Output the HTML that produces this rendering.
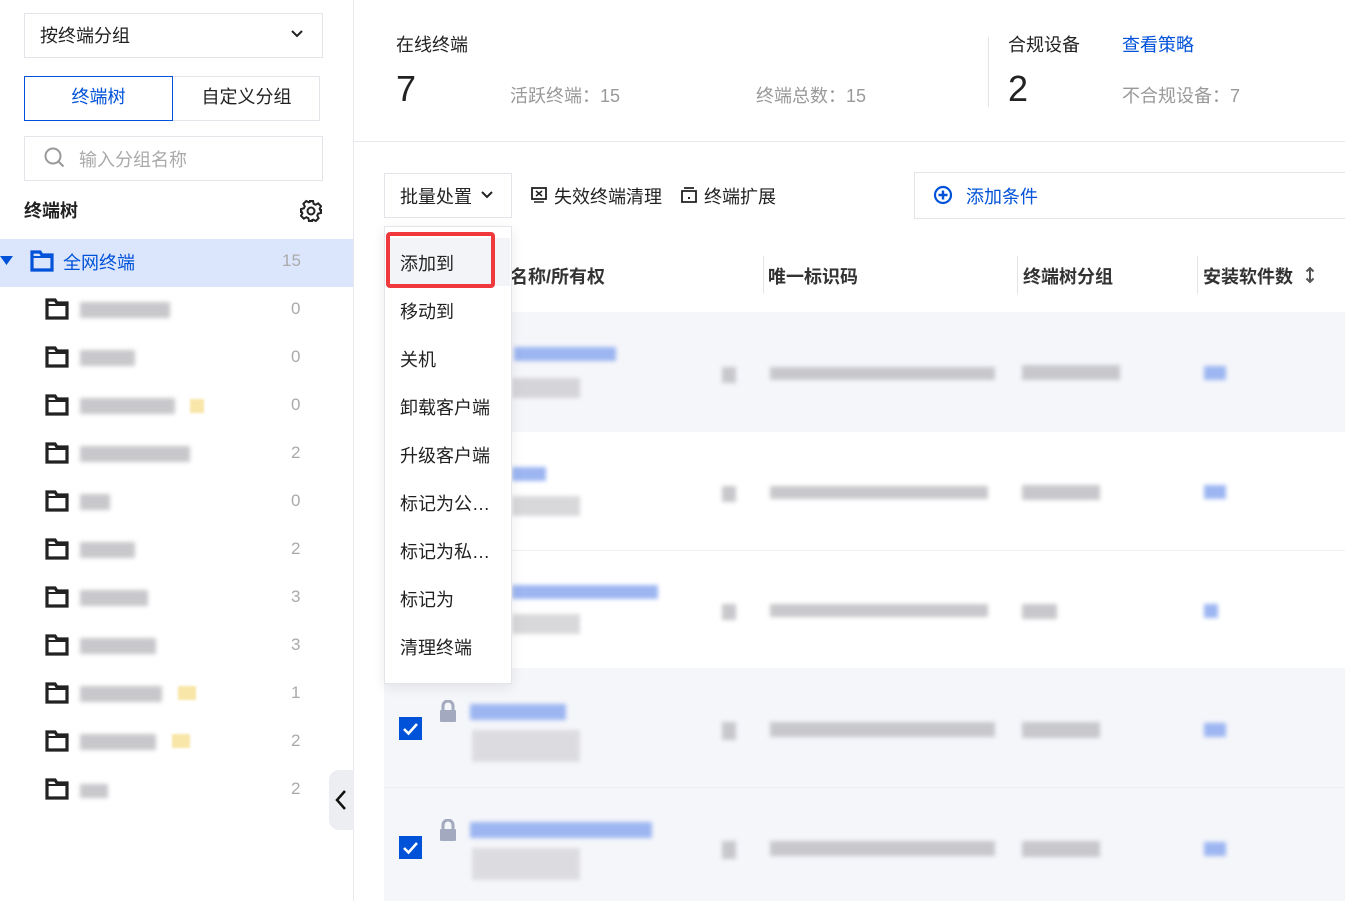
<!DOCTYPE html><html><head><meta charset="utf-8"><style>
*{box-sizing:border-box;margin:0;padding:0}
body{width:1345px;height:901px;overflow:hidden;background:#fff;font-family:"Liberation Sans","Noto Sans CJK SC",sans-serif;font-size:18px;color:#222;position:relative}
.a{position:absolute}
.box{position:absolute;border:1px solid #e3e5ea;background:#fff}
.bl{position:absolute;filter:blur(2px);background:#c8c8cc}
.blb{position:absolute;filter:blur(2px);background:#9db6f2}
.cnt{position:absolute;left:291px;color:#aaa;font-size:17px}
.fold{position:absolute;left:45px}
.mi{position:absolute;left:400px;font-size:18px;color:#222}
.chk{position:absolute;left:399px;width:23px;height:23px;background:#0052d9}
</style></head><body>
<svg width="0" height="0" style="position:absolute"><defs><symbol id="fd" viewBox="0 0 24 22"><path d="M2 2h8l2 3h10v15H2z" fill="none" stroke="currentColor" stroke-width="3.2" stroke-linejoin="miter"/><path d="M2 7h20" stroke="currentColor" stroke-width="2"/></symbol></defs></svg>
<!-- sidebar -->
<div class="a" style="left:353px;top:0;width:1px;height:901px;background:#e8e8ec"></div>
<div class="box" style="left:24px;top:13px;width:299px;height:45px"></div>
<div class="a" style="left:40px;top:22px">按终端分组</div>
<svg class="a" style="left:290px;top:29px" width="14" height="10"><path d="M2 2l5 5 5-5" stroke="#222" stroke-width="2" fill="none"/></svg>
<div class="box" style="left:24px;top:76px;width:296px;height:45px"></div>
<div class="a" style="left:24px;top:76px;width:149px;height:45px;border:1px solid #0052d9;color:#0052d9;text-align:center;line-height:41px">终端树</div>
<div class="a" style="left:173px;top:76px;width:147px;height:45px;text-align:center;line-height:43px">自定义分组</div>
<div class="box" style="left:24px;top:136px;width:299px;height:45px"></div>
<svg class="a" style="left:43px;top:146px" width="24" height="24"><circle cx="10" cy="10" r="7.5" stroke="#999" stroke-width="2" fill="none"/><path d="M15.5 15.5l5 5" stroke="#999" stroke-width="2"/></svg>
<div class="a" style="left:79px;top:146px;color:#aaa">输入分组名称</div>
<div class="a" style="left:24px;top:197px;font-weight:bold">终端树</div>
<svg class="a" style="left:299px;top:199px" width="24" height="24" viewBox="0 0 24 24"><path d="M10 2h4l.6 2.8 2 1 2.6-1.4 2.8 2.8-1.4 2.6 1 2L22 10v4l-2.8.6-1 2 1.4 2.6-2.8 2.8-2.6-1.4-2 1L14 22h-4l-.6-2.8-2-1-2.6 1.4-2.8-2.8 1.4-2.6-1-2L2 14v-4l2.8-.6 1-2-1.4-2.6 2.8-2.8 2.6 1.4 2-1z" fill="none" stroke="#222" stroke-width="2"/><circle cx="12" cy="12" r="3.5" fill="none" stroke="#222" stroke-width="2"/></svg>
<div class="a" style="left:0;top:239px;width:353px;height:48px;background:#dbe6fd"></div>
<svg class="a" style="left:0;top:256px" width="13" height="10"><path d="M0 0h13L6.5 9z" fill="#0052d9"/></svg>
<svg class="fold" style="left:30px;top:250px;color:#0052d9" width="24" height="22"><use href="#fd"/></svg>
<div class="a" style="left:63px;top:249px;color:#0052d9">全网终端</div>
<div class="cnt" style="left:282px;top:251px">15</div>
<svg class="fold" style="top:298px" width="24" height="22"><use href="#fd"/></svg><div class="bl" style="left:80px;top:302px;width:90px;height:16px"></div><div class="cnt" style="top:299px">0</div>
<svg class="fold" style="top:346px" width="24" height="22"><use href="#fd"/></svg><div class="bl" style="left:80px;top:350px;width:55px;height:16px"></div><div class="cnt" style="top:347px">0</div>
<svg class="fold" style="top:394px" width="24" height="22"><use href="#fd"/></svg><div class="bl" style="left:80px;top:398px;width:95px;height:16px"></div><div class="a" style="left:190px;top:399px;width:14px;height:14px;background:#f8e6a8;filter:blur(1px)"></div><div class="cnt" style="top:395px">0</div>
<svg class="fold" style="top:442px" width="24" height="22"><use href="#fd"/></svg><div class="bl" style="left:80px;top:446px;width:110px;height:16px"></div><div class="cnt" style="top:443px">2</div>
<svg class="fold" style="top:490px" width="24" height="22"><use href="#fd"/></svg><div class="bl" style="left:80px;top:494px;width:30px;height:16px"></div><div class="cnt" style="top:491px">0</div>
<svg class="fold" style="top:538px" width="24" height="22"><use href="#fd"/></svg><div class="bl" style="left:80px;top:542px;width:55px;height:16px"></div><div class="cnt" style="top:539px">2</div>
<svg class="fold" style="top:586px" width="24" height="22"><use href="#fd"/></svg><div class="bl" style="left:80px;top:590px;width:68px;height:16px"></div><div class="cnt" style="top:587px">3</div>
<svg class="fold" style="top:634px" width="24" height="22"><use href="#fd"/></svg><div class="bl" style="left:80px;top:638px;width:76px;height:16px"></div><div class="cnt" style="top:635px">3</div>
<svg class="fold" style="top:682px" width="24" height="22"><use href="#fd"/></svg><div class="bl" style="left:80px;top:686px;width:82px;height:16px"></div><div class="a" style="left:178px;top:686px;width:18px;height:14px;background:#f8e6a8;filter:blur(1px)"></div><div class="cnt" style="top:683px">1</div>
<svg class="fold" style="top:730px" width="24" height="22"><use href="#fd"/></svg><div class="bl" style="left:80px;top:734px;width:76px;height:16px"></div><div class="a" style="left:172px;top:734px;width:18px;height:14px;background:#f8e6a8;filter:blur(1px)"></div><div class="cnt" style="top:731px">2</div>
<svg class="fold" style="top:778px" width="24" height="22"><use href="#fd"/></svg><div class="bl" style="left:80px;top:784px;width:28px;height:14px"></div><div class="cnt" style="top:779px">2</div>
<div class="a" style="left:329px;top:770px;width:25px;height:60px;background:#eceef2;border-radius:10px 0 0 10px"></div>
<svg class="a" style="left:334px;top:789px" width="14" height="22"><path d="M11 2L3 11l8 9" stroke="#111" stroke-width="2.5" fill="none"/></svg>
<!-- top stats -->
<div class="a" style="left:396px;top:31px">在线终端</div>
<div class="a" style="left:396px;top:68px;font-size:36px">7</div>
<div class="a" style="left:510px;top:82px;color:#999">活跃终端：15</div>
<div class="a" style="left:756px;top:82px;color:#999">终端总数：15</div>
<div class="a" style="left:988px;top:37px;width:1px;height:70px;background:#e3e5ea"></div>
<div class="a" style="left:1008px;top:31px">合规设备</div>
<div class="a" style="left:1122px;top:31px;color:#0052d9">查看策略</div>
<div class="a" style="left:1008px;top:68px;font-size:36px">2</div>
<div class="a" style="left:1122px;top:82px;color:#999">不合规设备：7</div>
<div class="a" style="left:354px;top:141px;width:991px;height:1px;background:#e8e8ec"></div>
<!-- toolbar -->
<div class="box" style="left:384px;top:173px;width:128px;height:45px"></div>
<div class="a" style="left:400px;top:183px">批量处置</div>
<svg class="a" style="left:480px;top:190px" width="14" height="10"><path d="M2 2l5 5 5-5" stroke="#222" stroke-width="2" fill="none"/></svg>
<svg class="a" style="left:531px;top:187px" width="16" height="16"><rect x="1" y="1" width="14" height="11" stroke="#222" stroke-width="1.8" fill="none"/><path d="M5 4l6 5M11 4l-6 5M3 15h10" stroke="#222" stroke-width="1.5"/></svg>
<div class="a" style="left:554px;top:183px">失效终端清理</div>
<svg class="a" style="left:681px;top:187px" width="16" height="16"><path d="M3 1h10M1 4h14v11H1z" stroke="#222" stroke-width="1.8" fill="none"/><path d="M7 11h2" stroke="#222" stroke-width="2"/></svg>
<div class="a" style="left:704px;top:183px">终端扩展</div>
<div class="box" style="left:914px;top:172px;width:440px;height:47px"></div>
<svg class="a" style="left:933px;top:185px" width="20" height="20"><circle cx="10" cy="10" r="8" stroke="#0052d9" stroke-width="2.2" fill="none"/><path d="M10 5.5v9M5.5 10h9" stroke="#0052d9" stroke-width="2.4"/></svg>
<div class="a" style="left:966px;top:183px;color:#0052d9">添加条件</div>
<!-- table -->
<div class="a" style="left:384px;top:312px;width:961px;height:589px;background:#f5f6fa"></div>
<div class="a" style="left:384px;top:432px;width:880px;height:236px;background:#fff"></div>
<div class="a" style="left:1264px;top:432px;width:81px;height:236px;background:#fff"></div>
<div class="a" style="left:384px;top:550px;width:961px;height:1px;background:#eef0f4"></div>
<div class="a" style="left:384px;top:787px;width:961px;height:1px;background:#eceef2"></div>
<div class="a" style="left:510px;top:263px;font-weight:bold;color:#333">名称/所有权</div>
<div class="a" style="left:763px;top:256px;width:1px;height:38px;background:#e3e5ea"></div>
<div class="a" style="left:768px;top:263px;font-weight:bold;color:#333">唯一标识码</div>
<div class="a" style="left:1017px;top:256px;width:1px;height:38px;background:#e3e5ea"></div>
<div class="a" style="left:1023px;top:263px;font-weight:bold;color:#333">终端树分组</div>
<div class="a" style="left:1197px;top:256px;width:1px;height:38px;background:#e3e5ea"></div>
<div class="a" style="left:1203px;top:263px;font-weight:bold;color:#333">安装软件数</div>
<svg class="a" style="left:1305px;top:266px" width="10" height="18"><path d="M5 2v14M1.5 5.5L5 2l3.5 3.5M1.5 12.5L5 16l3.5-3.5" stroke="#555" stroke-width="2" fill="none"/></svg>
<!-- rows -->
<div class="blb" style="left:514px;top:347px;width:102px;height:14px"></div><div class="bl" style="left:512px;top:378px;width:68px;height:20px;opacity:.7"></div><div class="bl" style="left:722px;top:367px;width:14px;height:16px"></div><div class="bl" style="left:770px;top:367px;width:225px;height:13px"></div><div class="bl" style="left:1022px;top:365px;width:98px;height:15px"></div><div class="blb" style="left:1204px;top:366px;width:22px;height:14px"></div>
<div class="blb" style="left:512px;top:467px;width:34px;height:14px"></div><div class="bl" style="left:512px;top:496px;width:68px;height:20px;opacity:.7"></div><div class="bl" style="left:722px;top:486px;width:14px;height:16px"></div><div class="bl" style="left:770px;top:486px;width:218px;height:13px"></div><div class="bl" style="left:1022px;top:485px;width:78px;height:15px"></div><div class="blb" style="left:1204px;top:485px;width:22px;height:14px"></div>
<div class="blb" style="left:512px;top:585px;width:146px;height:14px"></div><div class="bl" style="left:512px;top:614px;width:68px;height:20px;opacity:.7"></div><div class="bl" style="left:722px;top:604px;width:14px;height:16px"></div><div class="bl" style="left:770px;top:604px;width:218px;height:13px"></div><div class="bl" style="left:1022px;top:604px;width:35px;height:15px"></div><div class="blb" style="left:1204px;top:604px;width:14px;height:14px"></div>
<div class="chk" style="top:717px"><svg width="23" height="23"><path d="M5 12l4.5 4.5L18 7" stroke="#fff" stroke-width="2.6" fill="none"/></svg></div>
<svg class="a" style="left:439px;top:700px" width="18" height="22"><path d="M4 10V6a5 5 0 0110 0v4" stroke="#a3a9bf" stroke-width="3" fill="none"/><rect x="1" y="10" width="16" height="12" rx="1" fill="#a3a9bf"/></svg>
<div class="blb" style="left:470px;top:704px;width:96px;height:16px"></div><div class="bl" style="left:472px;top:730px;width:108px;height:32px;opacity:.55"></div><div class="bl" style="left:722px;top:722px;width:14px;height:18px"></div><div class="bl" style="left:770px;top:722px;width:225px;height:15px"></div><div class="bl" style="left:1022px;top:722px;width:78px;height:16px"></div><div class="blb" style="left:1204px;top:723px;width:22px;height:14px"></div>
<div class="chk" style="top:836px"><svg width="23" height="23"><path d="M5 12l4.5 4.5L18 7" stroke="#fff" stroke-width="2.6" fill="none"/></svg></div>
<svg class="a" style="left:439px;top:819px" width="18" height="22"><path d="M4 10V6a5 5 0 0110 0v4" stroke="#a3a9bf" stroke-width="3" fill="none"/><rect x="1" y="10" width="16" height="12" rx="1" fill="#a3a9bf"/></svg>
<div class="blb" style="left:470px;top:822px;width:182px;height:16px"></div><div class="bl" style="left:472px;top:848px;width:108px;height:32px;opacity:.55"></div><div class="bl" style="left:722px;top:841px;width:14px;height:18px"></div><div class="bl" style="left:770px;top:841px;width:225px;height:15px"></div><div class="bl" style="left:1022px;top:841px;width:78px;height:16px"></div><div class="blb" style="left:1204px;top:842px;width:22px;height:14px"></div>
<!-- dropdown menu -->
<div class="a" style="left:384px;top:226px;width:128px;height:458px;background:#fff;border:1px solid #e3e5ea;box-shadow:0 4px 12px rgba(0,0,0,.08)"></div>
<div class="a" style="left:386px;top:238px;width:124px;height:48px;background:#f3f4f7"></div>
<div class="a" style="left:386px;top:232px;width:109px;height:56px;border:4px solid #f0393c;border-radius:4px"></div>
<div class="mi" style="top:250px">添加到</div>
<div class="mi" style="top:298px">移动到</div>
<div class="mi" style="top:346px">关机</div>
<div class="mi" style="top:394px">卸载客户端</div>
<div class="mi" style="top:442px">升级客户端</div>
<div class="mi" style="top:490px">标记为公…</div>
<div class="mi" style="top:538px">标记为私…</div>
<div class="mi" style="top:586px">标记为</div>
<div class="mi" style="top:634px">清理终端</div>
</body></html>
